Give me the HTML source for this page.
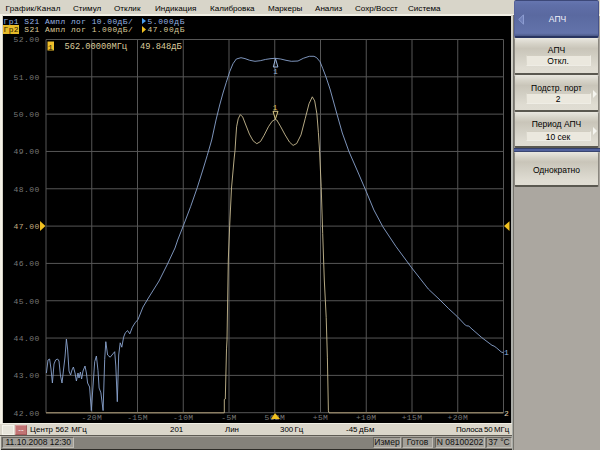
<!DOCTYPE html>
<html><head><meta charset="utf-8">
<style>
*{margin:0;padding:0;box-sizing:border-box}
html,body{width:600px;height:450px;overflow:hidden}
body{position:relative;background:#aba7a0;font-family:"Liberation Sans",sans-serif;}
.a{position:absolute}
#menu{left:0;top:0;width:600px;height:16px;background:#d8d5c9;border-bottom:2px solid #f1efe5}
#menu span{position:absolute;top:3px;font-size:8.1px;color:#000;white-space:nowrap;line-height:11px}
#lstrip{left:0;top:15px;width:3px;height:421px;background:linear-gradient(90deg,#f1efe3 0%,#f7f5ea 60%,#b8b6aa 100%)}
#chart{left:3px;top:16px;width:508px;height:407px;background:#000}
#rstrip{left:511px;top:15px;width:3px;height:435px;background:linear-gradient(#d6d4ca,#b4b5b0 40%,#a9aba6);border-right:1px solid #76746d}
svg{position:absolute;left:0;top:0}
.mono{font-family:"Liberation Mono",monospace}
.key{position:absolute;left:514px;width:85px;border:1px solid #8a877f;border-top:1px solid #e8e6de;border-bottom:2px solid #5a5850;border-radius:2px;background:linear-gradient(#e6e4dc 0%,#d6d3c8 14%,#c9c5b9 28%,#d3d0c5 55%,#dfdcd2 85%,#e0ddd3 100%);}
.key .lb{position:absolute;left:0;width:100%;text-align:center;font-size:8.5px;color:#000;line-height:10px}
.key .vb{position:absolute;left:10.5px;width:65px;height:11px;background:#ebe8de;border-top:1px solid #d2cec2;border-left:1px solid #dcd9ce;border-right:1px solid #efede5;border-bottom:1px solid #efede5;text-align:center;font-size:8.5px;color:#000;line-height:10px}
.arr{position:absolute;right:1px;width:0;height:0;border-top:4px solid transparent;border-bottom:4px solid transparent;border-left:4px solid #f5f5f0}
#status{left:0;top:423px;width:512px;height:13px;background:#dad6ca;border-top:1px solid #f0eee4;border-bottom:1px solid #5e5b54}
#status span{position:absolute;top:-0.5px;font-size:7.9px;color:#000;line-height:11px;white-space:nowrap}
#bottom{left:0;top:436px;width:512px;height:14px;background:#85827b;border-top:1px solid #adaaa2;border-bottom:1.5px solid #2e2c28}
.bx{position:absolute;top:0px;height:11px;background:#a3a099;border-top:1px solid #66645e;border-left:1px solid #66645e;border-bottom:1px solid #c0bdb6;border-right:1px solid #c0bdb6;font-size:8.5px;color:#111;line-height:9px;white-space:nowrap;text-align:center}
</style></head><body>
<div id="menu" class="a">
<span style="left:5.5px;letter-spacing:0.2px">График/Канал</span>
<span style="left:73px">Стимул</span>
<span style="left:114px">Отклик</span>
<span style="left:155px">Индикация</span>
<span style="left:210px">Калибровка</span>
<span style="left:268px">Маркеры</span>
<span style="left:315px">Анализ</span>
<span style="left:355px">Сохр/Восст</span>
<span style="left:408px">Система</span>
</div>
<div id="lstrip" class="a"></div>
<div id="chart" class="a"></div>
<svg width="600" height="450" viewBox="0 0 600 450">
<g stroke="#565656" stroke-width="1"><line x1="46.00" y1="39.5" x2="46.00" y2="412.7"/><line x1="91.75" y1="39.5" x2="91.75" y2="412.7"/><line x1="137.50" y1="39.5" x2="137.50" y2="412.7"/><line x1="183.25" y1="39.5" x2="183.25" y2="412.7"/><line x1="229.00" y1="39.5" x2="229.00" y2="412.7"/><line x1="274.75" y1="39.5" x2="274.75" y2="412.7"/><line x1="320.50" y1="39.5" x2="320.50" y2="412.7"/><line x1="366.25" y1="39.5" x2="366.25" y2="412.7"/><line x1="412.00" y1="39.5" x2="412.00" y2="412.7"/><line x1="457.75" y1="39.5" x2="457.75" y2="412.7"/><line x1="503.50" y1="39.5" x2="503.50" y2="412.7"/><line x1="46" y1="39.50" x2="503.5" y2="39.50"/><line x1="46" y1="76.82" x2="503.5" y2="76.82"/><line x1="46" y1="114.14" x2="503.5" y2="114.14"/><line x1="46" y1="151.46" x2="503.5" y2="151.46"/><line x1="46" y1="188.78" x2="503.5" y2="188.78"/><line x1="46" y1="226.10" x2="503.5" y2="226.10"/><line x1="46" y1="263.42" x2="503.5" y2="263.42"/><line x1="46" y1="300.74" x2="503.5" y2="300.74"/><line x1="46" y1="338.06" x2="503.5" y2="338.06"/><line x1="46" y1="375.38" x2="503.5" y2="375.38"/><line x1="46" y1="412.70" x2="503.5" y2="412.70"/></g>
<g class="mono" font-size="7.9px" letter-spacing="0.45">
<text x="3.5" y="24.2" fill="#98b4e2" xml:space="preserve">Гр1 S21 Ампл лог 10.00дБ/</text><text x="147.5" y="24.2" fill="#98b4e2" letter-spacing="0.62">5.000дБ</text>
<rect x="3" y="25" width="16" height="9" fill="#e8bb28"/>
<text x="3.5" y="32.4" fill="#dccb9c" xml:space="preserve"><tspan fill="#2a2000">Гр2</tspan> S21 Ампл лог 1.000дБ/</text><text x="147.5" y="32.4" fill="#dccb9c" letter-spacing="0.62">47.00дБ</text>
<polygon points="142,18 146,21 142,24" fill="#4aa0f0"/>
<polygon points="142,26 146,29.5 142,33" fill="#f0c020"/>
</g>
<g class="mono" font-size="8px" letter-spacing="0.45" fill="#767676"><text x="13.5" y="42.3" fill="#767676">52.00</text><text x="13.5" y="79.6" fill="#767676">51.00</text><text x="13.5" y="116.9" fill="#767676">50.00</text><text x="13.5" y="154.3" fill="#767676">49.00</text><text x="13.5" y="191.6" fill="#767676">48.00</text><text x="13.5" y="228.9" fill="#c0ac80">47.00</text><text x="13.5" y="266.2" fill="#767676">46.00</text><text x="13.5" y="303.5" fill="#767676">45.00</text><text x="13.5" y="340.9" fill="#767676">44.00</text><text x="13.5" y="378.2" fill="#767676">43.00</text><text x="13.5" y="415.5" fill="#767676">42.00</text></g>
<polygon points="40,221 45.5,226 40,231" fill="#f0c020"/>
<polygon points="509.5,221.3 504,226.1 509.5,230.9" fill="#f0c020"/>
<g class="mono" font-size="8px" letter-spacing="0.35" fill="#767676"><text x="91.8" y="419.5" text-anchor="middle">-20M</text><text x="137.5" y="419.5" text-anchor="middle">-15M</text><text x="183.2" y="419.5" text-anchor="middle">-10M</text><text x="229.0" y="419.5" text-anchor="middle">-5M</text><text x="274.8" y="419.5" text-anchor="middle">562M</text><text x="320.5" y="419.5" text-anchor="middle">+5M</text><text x="366.2" y="419.5" text-anchor="middle">+10M</text><text x="412.0" y="419.5" text-anchor="middle">+15M</text><text x="457.8" y="419.5" text-anchor="middle">+20M</text></g>
<path d="M46.4 373.0 L48.0 360.0 L49.6 359.0 L51.0 369.0 L52.4 383.0 L54.0 364.0 L55.6 360.0 L57.6 359.0 L59.0 361.0 L60.4 375.0 L62.0 383.0 L63.6 369.0 L65.0 357.0 L66.4 339.0 L67.6 349.0 L69.0 371.0 L70.6 375.0 L72.0 370.0 L73.4 367.0 L75.0 373.0 L76.4 381.0 L78.0 373.0 L79.0 378.0 L80.4 372.0 L81.6 379.0 L83.0 371.0 L85.0 366.0 L86.4 373.0 L87.6 383.0 L89.6 387.0 L91.3 410.6 L92.9 388.0 L94.7 361.7 L96.4 356.0 L98.0 370.6 L99.1 388.0 L100.9 392.8 L103.1 410.6 L104.7 359.4 L105.8 341.7 L107.6 355.0 L110.2 357.2 L112.9 353.9 L114.7 351.7 L115.8 366.0 L117.3 401.7 L118.7 355.0 L120.2 342.8 L121.8 347.2 L123.6 337.2 L125.3 332.8 L127.6 330.6 L129.8 333.9 L132.4 327.2 L135.1 322.8 L138.0 319.5 L143.0 307.0 L149.0 297.0 L159.0 281.0 L168.0 263.0 L175.0 248.0 L177.7 240.0 L183.4 225.6 L190.6 206.7 L197.2 187.8 L202.8 170.0 L207.2 155.6 L211.7 140.0 L216.0 120.0 L219.7 105.0 L223.0 93.0 L226.3 82.3 L229.7 71.7 L233.0 63.7 L236.3 59.0 L241.0 57.7 L245.0 58.6 L249.7 60.3 L255.0 61.3 L260.3 60.7 L265.7 59.4 L271.0 58.6 L275.3 58.3 L280.7 59.0 L286.0 60.3 L291.3 61.3 L298.0 61.0 L303.3 58.3 L309.3 56.3 L314.0 56.3 L316.7 57.7 L320.0 61.7 L322.7 68.3 L326.0 77.0 L330.0 89.0 L337.0 114.3 L342.3 133.0 L349.0 151.7 L358.3 173.0 L366.3 191.7 L373.9 210.0 L382.8 226.7 L396.1 246.7 L411.7 267.8 L428.3 289.0 L440.0 300.0 L448.7 308.7 L457.3 316.6 L465.3 325.1 L466.7 325.8 L468.9 326.1 L471.0 328.2 L481.8 337.6 L492.0 345.3 L494.1 346.1 L496.3 347.7 L501.3 352.0 L503.5 352.7" fill="none" stroke="#8aa4cf" stroke-width="0.9" stroke-linejoin="round"/>
<path d="M46 412.8 L224.3 412.8 M329 412.8 L503.5 412.8" fill="none" stroke="#8a7d62" stroke-width="1.4"/>
<path d="M224.3 412.8 L224.3 399.5 L225.3 399.0 L226.5 348.9 L227.0 340.0 L228.3 260.0 L229.7 225.3 L231.5 188.0 L234.2 158.0 L235.0 150.7 L235.8 138.0 L236.6 126.8 L238.2 118.8 L240.3 114.6 L242.7 117.0 L245.8 125.0 L249.4 134.1 L253.1 140.8 L256.8 143.7 L260.5 141.5 L264.1 135.3 L268.4 126.8 L272.1 121.3 L275.1 119.4 L276.8 120.0 L280.8 126.9 L285.1 134.9 L289.5 142.1 L293.1 145.4 L296.7 143.5 L301.0 134.9 L305.3 118.2 L309.0 103.8 L312.3 96.8 L314.7 100.9 L316.9 113.9 L318.4 132.7 L319.5 150.0 L321.2 186.7 L322.7 233.5 L324.3 280.0 L326.2 317.4 L327.4 357.9 L328.4 410.8 L329.0 412.8" fill="none" stroke="#c8bb92" stroke-width="0.9" stroke-linejoin="round"/>
<polygon points="271,419 275,413 280,419" fill="#f0c020"/>
<!-- marker readout -->
<g class="mono" font-size="8.7px">
<rect x="47.5" y="41.5" width="6.5" height="9" fill="#eebf2c"/>
<text x="48" y="49.5" fill="#2a2000" font-size="8px">1</text>
<text x="64.5" y="49" fill="#dccb9c">562.00000МГц</text>
<text x="140" y="49" fill="#dccb9c">49.848дБ</text>
</g>
<!-- trace markers -->
<polygon points="273,111.3 278,111.3 275.4,119.2" fill="#141006" stroke="#d8c888" stroke-width="1"/>
<text x="272.8" y="109.8" class="mono" font-size="7.5px" fill="#e0c860">1</text>
<polygon points="275.5,58.6 273.3,67 277.9,67" fill="none" stroke="#9ab4dc" stroke-width="1"/>
<text x="273.2" y="73.9" class="mono" font-size="7.5px" fill="#9ab4dc">1</text>
<text x="504" y="354.8" class="mono" font-size="8px" fill="#8eb0e0">1</text>
<text x="504" y="416" class="mono" font-size="8px" fill="#e0d0b0">2</text>
</svg>
<div id="rstrip" class="a"></div>
<!-- right panel -->
<div class="a" style="left:514px;top:0px;width:85px;height:38px;background:linear-gradient(#6676b0 0%,#5f6fa8 12%,#5a69a0 40%,#5f6fa6 70%,#6373ab 92%,#4a5888 100%);border-top:1px solid #3c4878;border-bottom:2px solid #283460;border-right:1px solid #46528a;border-left:1px solid #56629a;border-radius:2px">
<svg class="a" style="left:1px;top:10.5px" width="12" height="14"><polygon points="7.5,2.8 2.8,7.5 7.5,12.2" fill="#6f7fb8" stroke="#8d9dd2" stroke-width="1"/></svg>
<div class="a" style="left:1px;top:12.5px;width:100%;text-align:center;font-size:8.5px;color:#f4f4fa;line-height:11px">АПЧ</div>
</div>
<div class="key" style="top:38px;height:37px"><div class="lb" style="top:6px">АПЧ</div><div class="vb" style="top:16px;height:11px">Откл.</div></div>
<div class="key" style="top:75px;height:37px"><div class="lb" style="top:7px">Подстр. порт</div><div class="vb" style="top:17px;height:10.5px">2</div><div class="arr" style="top:14px"></div></div>
<div class="key" style="top:112px;height:36px"><div class="lb" style="top:6px">Период АПЧ</div><div class="vb" style="top:18px;height:10px">10 сек</div><div class="arr" style="top:14px"></div></div>
<div class="a" style="left:514px;top:147.5px;width:86px;height:4.5px;background:#51619c;border-top:1px solid #34406a;border-bottom:1px solid #3a4670"></div>
<div class="key" style="top:151.5px;height:35px"><div class="lb" style="top:12px">Однократно</div></div>
<!-- status -->
<div id="status" class="a">
<div class="a" style="left:2px;top:0.5px;width:12px;height:10.5px;background:#e6e4da;border:1px solid #f4f2ea"></div>
<div class="a" style="left:15px;top:0.5px;width:12px;height:10.5px;background:#c27474;border:1px solid #d49a9a;border-right-color:#a85c5c;border-bottom-color:#a85c5c;color:#fff;font-size:8px;line-height:8px;text-align:center">--</div>
<span style="left:30px;letter-spacing:0.1px">Центр 562 МГц</span>
<span style="left:170px">201</span>
<span style="left:225px">Лин</span>
<span style="left:280px;word-spacing:-0.8px">300 Гц</span>
<span style="left:346px;word-spacing:-0.5px">-45 дБм</span>
<span style="left:456px;letter-spacing:-0.12px;word-spacing:-0.6px">Полоса 50 МГц</span>
</div>
<div class="a" style="left:0;top:436px;width:1px;height:14px;background:#d6d4ca;z-index:5"></div>
<div id="bottom" class="a">
<div class="bx" style="left:2px;width:72px;text-align:left;padding-left:2.5px">11.10.2008 12:30</div>
<div class="bx" style="left:373px;width:28px">Измер</div>
<div class="bx" style="left:402px;width:31px">Готов</div>
<div class="bx" style="left:435px;width:50px">N 08100202</div>
<div class="bx" style="left:486px;width:26px">37 °C</div>
</div>
</body></html>
